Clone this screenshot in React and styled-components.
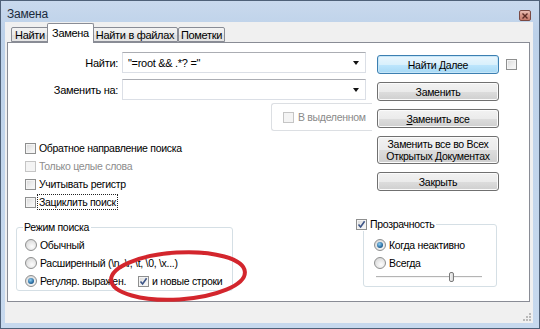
import React from 'react'
import styled, { createGlobalStyle } from 'styled-components'

const GlobalStyle = createGlobalStyle`
  html, body { margin: 0; padding: 0; background: #fff; }
  body {
    font-family: "Liberation Sans", "DejaVu Sans", sans-serif;
    font-size: 10.5px;
    letter-spacing: -0.3px;
    color: #000;
  }
  * { box-sizing: border-box; }
`

const Page = styled.div`
  position: relative;
  width: 540px;
  height: 329px;
`

const Window = styled.div`
  width: 540px;
  height: 329px;
  border: 1px solid #4f6178;
  background: linear-gradient(180deg, #c9d9ed 0%, #bcd1e9 10%, #c3d6ec 60%, #c7d9ee 100%);
  display: flex;
  flex-direction: column;
  overflow: hidden;
`

const TitleBar = styled.div`
  height: 21px;
  display: flex;
  justify-content: space-between;
  align-items: flex-start;
  padding: 0 8px 0 6px;
`

const Title = styled.div`
  padding-top: 6px;
  font-size: 12px;
  letter-spacing: -0.2px;
  color: #1b2a3b;
`

const CloseBox = styled.div`
  margin-top: 9px;
  width: 12px;
  height: 11px;
  border: 1px solid #7a4a44;
  border-radius: 2px;
  background: linear-gradient(180deg, #e9bdb4 0%, #d49486 50%, #c47a6c 100%);
  display: flex;
  align-items: center;
  justify-content: center;
`

const Client = styled.div`
  flex: 1;
  margin: 0 6px 5px 4px;
  background: #f0f0f0;
  display: flex;
  flex-direction: column;
`

const TabRow = styled.div`
  height: 20px;
  display: flex;
  align-items: flex-end;
  padding-left: 6px;
`

const Tab = styled.div`
  position: relative;
  width: ${p => p.$w}px;
  height: ${p => (p.$active ? 20 : 15)}px;
  margin: 0 ${p => (p.$active ? -2 : 0)}px ${p => (p.$active ? -1 : 0)}px;
  z-index: ${p => (p.$active ? 2 : 1)};
  border: 1px solid #898c95;
  border-bottom: ${p => (p.$active ? 'none' : '1px solid #898c95')};
  border-radius: 2px 2px 0 0;
  background: ${p => (p.$active ? '#fff' : 'linear-gradient(180deg, #f3f3f3 0%, #ebebeb 50%, #dedede 51%, #e6e6e6 100%)')};
  font-size: 11px;
  text-align: center;
  line-height: 13px;
  padding-top: ${p => (p.$active ? 3 : 1)}px;
  white-space: nowrap;
`

const Panel = styled.div`
  flex: 1;
  margin: 0 3px 0 2px;
  background: #fff;
  border: 1px solid #898c95;
  display: flex;
  flex-direction: column;
`

const TopArea = styled.div`
  display: flex;
  gap: 5px;
`

const LeftCol = styled.div`
  width: 364px;
  display: flex;
  flex-direction: column;
  padding-top: 9px;
`

const FieldRow = styled.div`
  display: flex;
  align-items: center;
  gap: 4px;
  margin-bottom: 6px;
`

const FieldLabel = styled.div`
  width: 110px;
  text-align: right;
  font-size: 11px;
`

const Combo = styled.div`
  width: 244px;
  height: 21px;
  border: 1px solid #dbdfe6;
  border-top-color: #abadb3;
  display: flex;
  align-items: center;
  justify-content: space-between;
  padding: 0 6px 0 5px;
  font-size: 11px;
  white-space: pre;
`

const Arrow = styled.span`
  width: 0;
  height: 0;
  border-left: 3.5px solid transparent;
  border-right: 3.5px solid transparent;
  border-top: 4px solid #111;
`

const SelectionBox = styled.div`
  margin: -3px 0 0 263px;
  height: 28px;
  border: 1px solid #dcdfe3;
  border-right: none;
  border-radius: 3px 0 0 3px;
  display: flex;
  align-items: center;
  gap: 4px;
  padding-left: 11px;
  color: #8a8a8a;
  white-space: nowrap;
`

const OptionList = styled.div`
  margin-top: 8px;
  padding-left: 17px;
  display: flex;
  flex-direction: column;
`

const OptionRow = styled.div`
  height: 18px;
  display: flex;
  align-items: center;
  gap: 3px;
  color: ${p => (p.$disabled ? '#8d8d8d' : '#000')};
  white-space: nowrap;
`

const FocusText = styled.span`
  outline: 1px dotted #222;
  outline-offset: 1px;
`

const Box = styled.span`
  flex: none;
  width: 11px;
  height: 11px;
  border: 1px solid ${p => (p.$disabled ? '#c5c5c5' : '#8e8f8f')};
  background: ${p => (p.$disabled ? '#f4f4f4' : 'linear-gradient(135deg, #d8d8d8 0%, #eeeeee 55%, #fbfbfb 100%)')};
  box-shadow: inset 0 0 0 1px #f4f4f4;
  display: inline-flex;
  align-items: center;
  justify-content: center;
`

const Radio = styled.span`
  flex: none;
  width: 12px;
  height: 12px;
  border-radius: 50%;
  border: 1px solid #8e8f8f;
  background: radial-gradient(circle at 60% 65%, #fdfdfd 0%, #e4e4e4 55%, #cfcfcf 100%);
  display: inline-flex;
  align-items: center;
  justify-content: center;

  &::after {
    content: '';
    display: ${p => (p.$on ? 'block' : 'none')};
    width: 6px;
    height: 6px;
    border-radius: 50%;
    background: radial-gradient(circle at 40% 35%, #8fd0f5 0%, #2a6ca0 60%, #173f62 100%);
  }
`

const RightCol = styled.div`
  display: flex;
  gap: 7px;
  padding-top: 12px;
`

const ButtonCol = styled.div`
  width: 122px;
  display: flex;
  flex-direction: column;
  gap: 8px;
`

const Button = styled.div`
  height: ${p => p.$h || 19}px;
  border: 1px solid ${p => (p.$focus ? '#3c7fb1' : '#707070')};
  border-radius: 3px;
  background: ${p => (p.$focus
    ? 'linear-gradient(180deg, #eaf6fd 0%, #d9f0fc 50%, #bee6fd 51%, #a7d9f5 100%)'
    : 'linear-gradient(180deg, #f2f2f2 0%, #ebebeb 50%, #dddddd 51%, #cfcfcf 100%)')};
  box-shadow: inset 0 0 0 1px ${p => (p.$focus ? '#c6e6f8' : '#fbfbfb')};
  display: flex;
  align-items: center;
  justify-content: center;
  text-align: center;
  line-height: 12px;
  white-space: nowrap;
`

const MiniCheck = styled.div`
  margin-top: 4px;
`

const BottomArea = styled.div`
  display: flex;
  justify-content: space-between;
  align-items: flex-start;
  padding: 0 32px 0 8px;
  margin-top: 9px;
`

const Group = styled.fieldset`
  margin: ${p => p.$lift || 0}px 0 0;
  width: ${p => p.$w}px;
  border: 1px solid #d5dfe5;
  border-radius: 3px;
  padding: ${p => p.$pad};
  min-width: 0;
`

const Legend = styled.legend`
  margin-left: ${p => p.$ml}px;
  padding: 0 2px 0 1px;
  line-height: 14px;
  display: flex;
  align-items: center;
  gap: 3px;
  white-space: nowrap;
`

const Slider = styled.div`
  margin-left: 2px;
  width: 106px;
  height: 10px;
  display: flex;
  align-items: center;
`

const Track = styled.div`
  flex: ${p => p.$grow};
  height: 2px;
  border-top: 1px solid #b4b4b4;
  border-bottom: 1px solid #f4f4f4;
`

const Thumb = styled.div`
  width: 5px;
  height: 10px;
  border: 1px solid #7a7a7a;
  border-radius: 2px;
  background: linear-gradient(90deg, #f4f4f4, #d8d8d8);
`

const StatusBar = styled.div`
  height: 21px;
  display: flex;
  justify-content: flex-end;
  align-items: flex-end;
  padding: 0 2px 2px 0;
`

const Annotation = styled.svg`
  position: absolute;
  left: 0;
  top: 0;
  pointer-events: none;
`

const Check = () => (
  <svg width="9" height="9" viewBox="0 0 9 9">
    <path d="M1.5 4.5 L3.6 7 L7.6 1.3" fill="none" stroke="#3d5587" strokeWidth="1.6" />
  </svg>
)

const CheckBox = ({ checked, disabled }) => (
  <Box $disabled={disabled}>{checked && <Check />}</Box>
)

const App = () => {
  return (
    <Page>
      <GlobalStyle />
      <Window>
        <TitleBar>
          <Title>Замена</Title>
          <CloseBox>
            <svg width="6" height="6" viewBox="0 0 6 6">
              <path d="M0.5 0.5 L5.5 5.5 M5.5 0.5 L0.5 5.5" stroke="#5b2a24" strokeWidth="1.4" />
            </svg>
          </CloseBox>
        </TitleBar>

        <Client>
          <TabRow>
            <Tab $w={38}>Найти</Tab>
            <Tab $w={47} $active>Замена</Tab>
            <Tab $w={86}>Найти в файлах</Tab>
            <Tab $w={47}>Пометки</Tab>
          </TabRow>

          <Panel>
            <TopArea>
              <LeftCol>
                <FieldRow>
                  <FieldLabel>Найти:</FieldLabel>
                  <Combo>
                    <span>{'"=root && .*? ="'}</span>
                    <Arrow />
                  </Combo>
                </FieldRow>
                <FieldRow>
                  <FieldLabel>Заменить на:</FieldLabel>
                  <Combo>
                    <span />
                    <Arrow />
                  </Combo>
                </FieldRow>

                <SelectionBox>
                  <CheckBox disabled />
                  <span>В выделенном</span>
                </SelectionBox>

                <OptionList>
                  <OptionRow><CheckBox /><span>Обратное направление поиска</span></OptionRow>
                  <OptionRow $disabled><CheckBox disabled /><span>Только целые слова</span></OptionRow>
                  <OptionRow><CheckBox /><span>Учитывать регистр</span></OptionRow>
                  <OptionRow><CheckBox /><FocusText>Зациклить поиск</FocusText></OptionRow>
                </OptionList>
              </LeftCol>

              <RightCol>
                <ButtonCol>
                  <Button $focus>Найти Далее</Button>
                  <Button>Заменить</Button>
                  <Button><span><u>З</u>аменить все</span></Button>
                  <Button $h={28}>
                    <span>Заменить все во Всех<br />Открытых <u>Д</u>окументах</span>
                  </Button>
                  <Button>Закрыть</Button>
                </ButtonCol>
                <MiniCheck><CheckBox /></MiniCheck>
              </RightCol>
            </TopArea>

            <BottomArea>
              <Group $w={217} $pad="2px 0 0 8px">
                <Legend $ml={-2}>Режим поиска</Legend>
                <OptionRow><Radio /><span>Обычный</span></OptionRow>
                <OptionRow><Radio /><span>Расширенный (\n, \r, \t, \0, \x...)</span></OptionRow>
                <OptionRow>
                  <Radio $on /><span>Регуляр. выражен.</span>
                  <span style={{ width: 6 }} />
                  <CheckBox checked /><span>и новые строки</span>
                </OptionRow>
              </Group>

              <Group $w={134} $lift={-3} $pad="5px 0 4px 10px">
                <Legend $ml={-19}><CheckBox checked /><span>Прозрачность</span></Legend>
                <OptionRow><Radio $on /><span>Когда неактивно</span></OptionRow>
                <OptionRow><Radio /><span>Всегда</span></OptionRow>
                <Slider>
                  <Track $grow={74} />
                  <Thumb />
                  <Track $grow={28} />
                </Slider>
              </Group>
            </BottomArea>
          </Panel>

          <StatusBar>
            <svg width="10" height="10" viewBox="0 0 10 10">
              <g fill="#b9b9b9">
                <rect x="8" y="2" width="2" height="2" />
                <rect x="5" y="5" width="2" height="2" />
                <rect x="8" y="5" width="2" height="2" />
                <rect x="2" y="8" width="2" height="2" />
                <rect x="5" y="8" width="2" height="2" />
                <rect x="8" y="8" width="2" height="2" />
              </g>
            </svg>
          </StatusBar>
        </Client>
      </Window>

      <Annotation width="540" height="329" viewBox="0 0 540 329">
        <ellipse
          cx="178" cy="276" rx="67" ry="23.5"
          transform="rotate(-3.5 178 276)"
          fill="none" stroke="#d3262d" strokeWidth="4"
        />
      </Annotation>
    </Page>
  )
}

export default App
